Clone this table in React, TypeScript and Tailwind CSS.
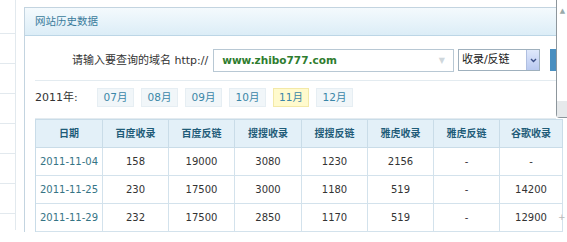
import React from 'react'

const cjk = { fontFamily: '"DejaVu Sans", "Noto Sans CJK SC", sans-serif' }

const months = ['07月', '08月', '09月', '10月', '11月', '12月']

const cols = [
    { title: '日期', w: 'w-[67px]' },
    { title: '百度收录', w: 'w-[66px]' },
    { title: '百度反链', w: 'w-[66px]' },
    { title: '搜搜收录', w: 'w-[67px]' },
    { title: '搜搜反链', w: 'w-[66px]' },
    { title: '雅虎收录', w: 'w-[66px]' },
    { title: '雅虎反链', w: 'w-[66px]' },
    { title: '谷歌收录', w: 'w-[63px]' },
]

const rows = [
    ['2011-11-04', '158', '19000', '3080', '1230', '2156', '-', '-'],
    ['2011-11-25', '230', '17500', '3000', '1180', '519', '-', '14200'],
    ['2011-11-29', '232', '17500', '2850', '1170', '519', '-', '12900'],
]

const App = () => {
    return (
        <div className="relative w-[567px] h-[242px] overflow-hidden bg-white flex text-[#333]" style={cjk}>
            {/* page behind the dialog */}
            <div className="w-[16px] h-[230px] border-r border-[#e2e9ee] flex flex-col">
                <div className="h-[34px] border-b border-[#e2e9ee]" />
                <div className="h-[30px] border-b border-[#e2e9ee]" />
                <div className="h-[30px] border-b border-[#e2e9ee]" />
                <div className="h-[30px] border-b border-[#e2e9ee]" />
                <div className="h-[30px] border-b border-[#e2e9ee]" />
                <div className="h-[30px] border-b border-[#e2e9ee]" />
                <div className="h-[30px] border-b border-[#e2e9ee]" />
            </div>

            <div className="ml-[8px] mt-[7px] flex-1 h-[225px] border-l border-t border-[#c3d4e0] flex flex-col">
                <div className="w-[531px] h-[28px] border-b border-[#bcd6e6] bg-gradient-to-b from-[#f4fafd] to-[#dcedf7] flex items-center pl-[10px]">
                    <span className="text-[10.5px] text-[#3b7c9c]">网站历史数据</span>
                </div>

                <div className="w-[531px] h-[45px] flex flex-col">
                    <div className="h-[44px] flex items-start pt-[13px] pl-[47px] overflow-hidden">
                        <span className="text-[11px] leading-[23px] text-[#333] whitespace-nowrap">请输入要查询的域名 http://</span>
                        <div className="ml-[5px] w-[243px] h-[23px] border border-[#b8c8d4] bg-white flex items-center pl-[8px] pr-[8px] justify-between">
                            <span className="text-[10.5px] font-bold text-[#2f7d2f]">www.zhibo777.com</span>
                            <span className="text-[8px] text-[#cfd7dc]">▼</span>
                        </div>
                        <div className="ml-[4px] w-[83px] h-[22px] border border-[#9fb0bd] bg-white flex items-center">
                            <span className="flex-1 pl-[3px] text-[11px] text-[#222]">收录/反链</span>
                            <div className="w-[13px] h-[20px] bg-gradient-to-b from-[#dfe8fb] to-[#b9c9f0] border-l border-[#b0bfe0] flex items-center justify-center">
                                <svg width="7" height="5" viewBox="0 0 7 5"><path d="M1 1 L3.5 3.5 L6 1" stroke="#3b4f86" strokeWidth="1.4" fill="none" /></svg>
                            </div>
                        </div>
                        <div className="ml-[10px] w-[6px] h-[22px] bg-[#4a8fc0]" />
                    </div>
                    <div className="ml-[10px] h-px bg-[#e3ebf0]" />
                </div>

                <div className="h-[38px] flex flex-col">
                    <div className="h-[37px] flex items-start pt-[7px] pl-[10px]">
                        <span className="w-[62px] text-[11px] leading-[19px] text-[#333]">2011年:</span>
                        <div className="flex gap-[7px]">
                            {months.map((m) => (
                                <div
                                    key={m}
                                    className={m === '11月'
                                        ? 'w-[36px] h-[19px] flex items-center justify-center text-[10.5px] text-[#3a86a8] bg-[#fffacd] border border-[#f3e9a8]'
                                        : 'w-[37px] h-[19px] flex items-center justify-center text-[10.5px] text-[#3a86a8] bg-[#f1f6f9] border border-[#e6eef3]'}
                                >
                                    {m}
                                </div>
                            ))}
                        </div>
                    </div>
                    <div className="ml-[10px] w-[521px] h-px bg-[#e3ebf0]" />
                </div>

                <div className="ml-[10px] w-[528px] border-l border-t border-[#c9dce8]">
                    <div className="flex h-[28px] bg-[#e3f0f8] border-b border-[#c9dce8]">
                        {cols.map((c) => (
                            <div key={c.title} className={`${c.w} shrink-0 border-r border-[#c9dce8] flex items-center justify-center text-[10px] font-bold text-[#1f5c78]`}>
                                {c.title}
                            </div>
                        ))}
                    </div>
                    {rows.map((r) => (
                        <div key={r[0]} className="flex h-[28px] border-b border-[#d3e2ec]">
                            {r.map((v, i) => (
                                <div key={i} className={`${cols[i].w} shrink-0 border-r border-[#d3e2ec] flex items-center justify-center text-[10px] ${i === 0 ? 'text-[#357485]' : 'text-[#333]'}`}>
                                    {v}
                                </div>
                            ))}
                        </div>
                    ))}
                </div>
            </div>

            {/* window edge over the dialog */}
            <div className="absolute left-[556px] top-0 w-[12px] h-[118px] border-l border-b border-[#8d969c] rounded-bl-[4px] bg-white flex flex-col">
                <div className="h-[20px] flex items-start justify-center pt-[6px] text-[7px] text-[#9aa]">▲</div>
                <div className="flex-1" />
                <div className="h-[16px] bg-[#e6e9eb]" />
            </div>
            <div className="absolute left-[558px] top-[212px] text-[9px] leading-[10px] text-[#bbb]">+</div>
        </div>
    )
}

export default App
